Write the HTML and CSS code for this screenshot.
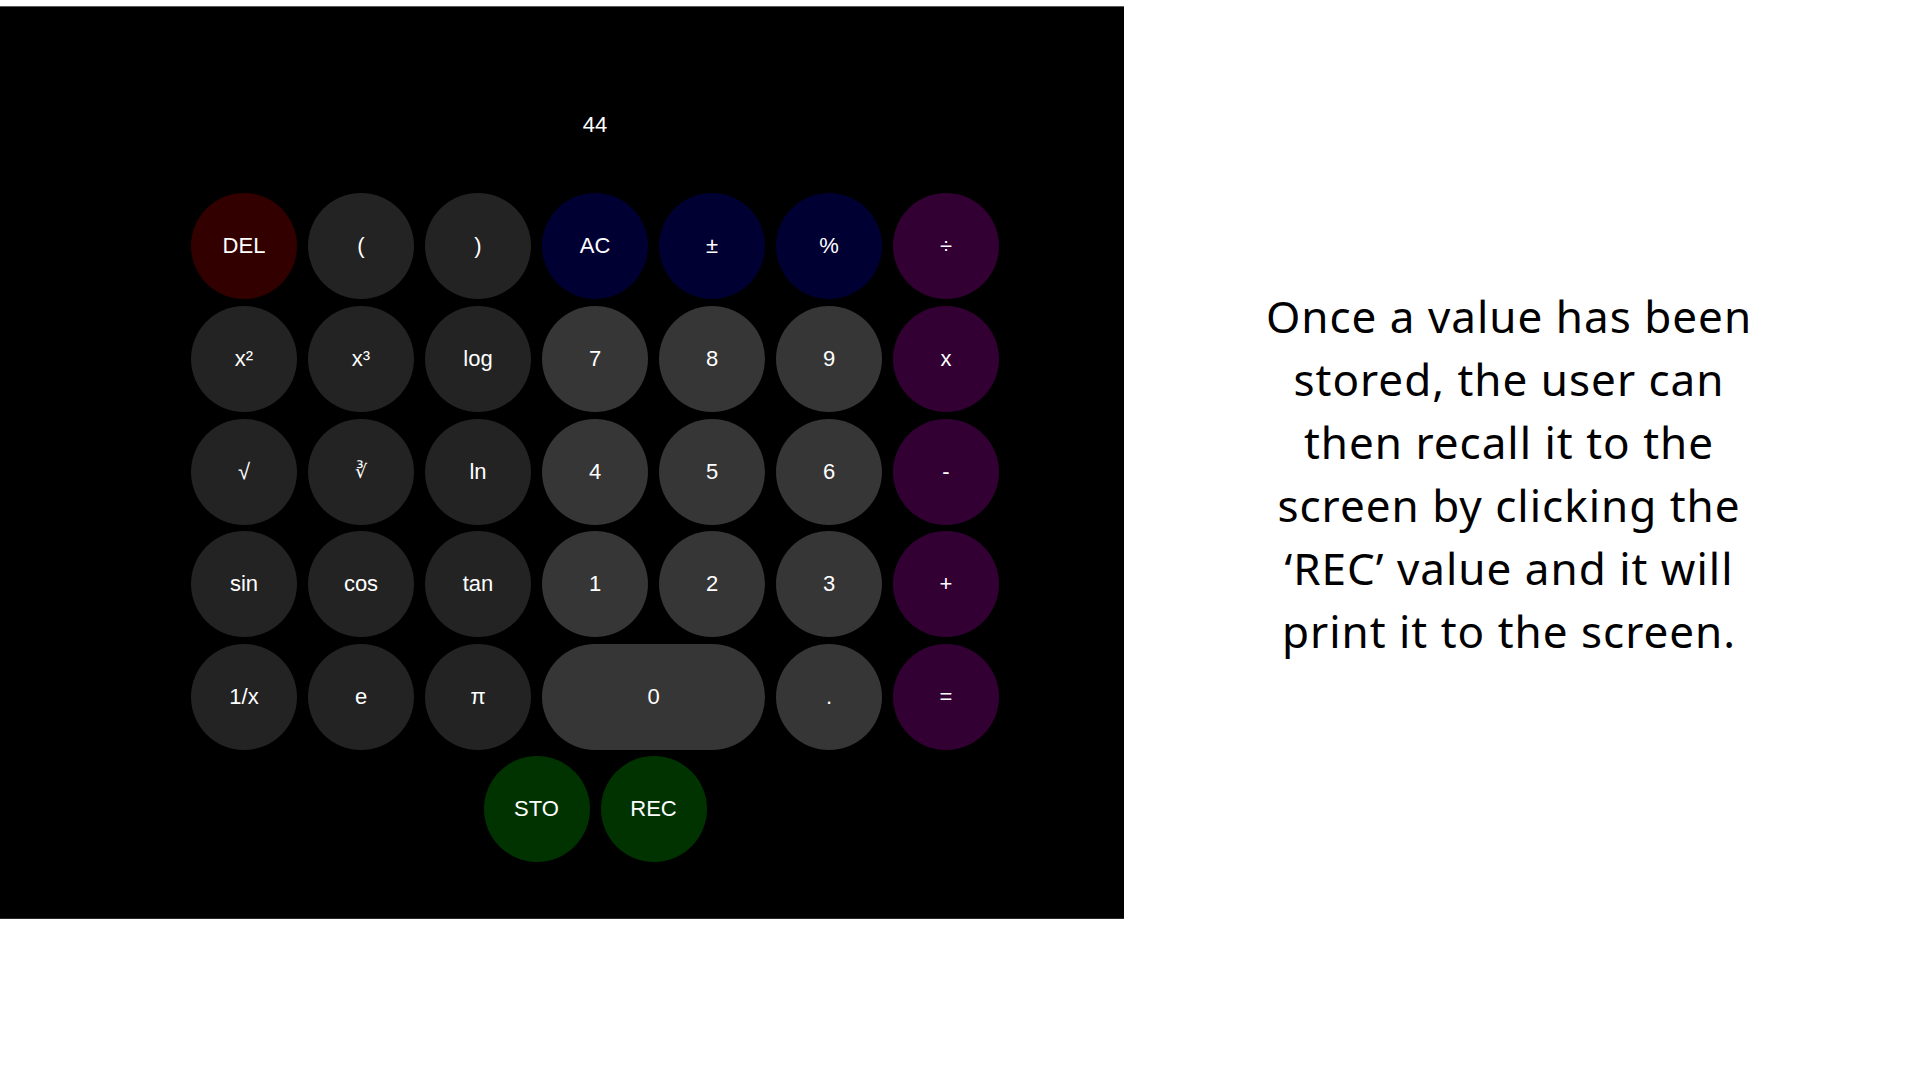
FILE: index.html
```html
<!DOCTYPE html>
<html lang="en">
<head>
<meta charset="utf-8">
<title>Calculator – Store and Recall</title>
<link rel="stylesheet" href="styles.css">
</head>
<body>
<div class="slide">
  <div class="calc-panel">
    <div class="calc">
      <div class="display">44</div>
      <div class="keys">
        <div class="key del">DEL</div>
        <div class="key fn">(</div>
        <div class="key fn">)</div>
        <div class="key clear">AC</div>
        <div class="key clear">±</div>
        <div class="key clear">%</div>
        <div class="key op">÷</div>

        <div class="key fn">x²</div>
        <div class="key fn">x³</div>
        <div class="key fn">log</div>
        <div class="key num">7</div>
        <div class="key num">8</div>
        <div class="key num">9</div>
        <div class="key op">x</div>

        <div class="key fn">√</div>
        <div class="key fn small">∛</div>
        <div class="key fn">ln</div>
        <div class="key num">4</div>
        <div class="key num">5</div>
        <div class="key num">6</div>
        <div class="key op">-</div>

        <div class="key fn">sin</div>
        <div class="key fn">cos</div>
        <div class="key fn">tan</div>
        <div class="key num">1</div>
        <div class="key num">2</div>
        <div class="key num">3</div>
        <div class="key op">+</div>

        <div class="key fn">1/x</div>
        <div class="key fn">e</div>
        <div class="key fn">π</div>
        <div class="key num wide">0</div>
        <div class="key num">.</div>
        <div class="key op">=</div>
      </div>
      <div class="memory">
        <div class="key mem">STO</div>
        <div class="key mem">REC</div>
      </div>
    </div>
  </div>
  <div class="note">
    <p class="note-text">Once a value has been<br>stored, the user can<br>then recall it to the<br>screen by clicking the<br>‘REC’ value and it will<br>print it to the screen.</p>
  </div>
</div>
</body>
</html>
```

FILE: styles.css
```css
html, body {
  margin: 0;
  padding: 0;
  background: #ffffff;
}

body {
  width: 1920px;
  height: 1080px;
  overflow: hidden;
}

.slide {
  display: flex;
  align-items: flex-start;
  padding-top: 6px;
}

.calc-panel {
  width: 1124px;
  height: 913px;
  background: #000000;
  border-top: 1px solid #5a5a5a;
  border-bottom: 1px solid #2a2a2a;
  box-sizing: border-box;
  padding-left: 191px;
  padding-top: 105px;
}

.calc {
  width: 808px;
  display: flex;
  flex-direction: column;
  font-family: "Liberation Sans", Arial, "DejaVu Sans", sans-serif;
  color: #ffffff;
}

.display {
  text-align: center;
  font-size: 22px;
  line-height: 26px;
  height: 26px;
  margin-bottom: 55px;
}

.keys {
  display: grid;
  grid-template-columns: repeat(7, 106px);
  grid-auto-rows: 106px;
  column-gap: 11px;
  row-gap: 6.75px;
}

.key {
  display: flex;
  align-items: center;
  justify-content: center;
  width: 106px;
  height: 106px;
  border-radius: 53px;
  font-size: 22px;
  color: #ffffff;
  box-sizing: border-box;
}

.key.wide {
  grid-column: span 2;
  width: auto;
}

.key.small {
  font-size: 19px;
}

.fn { background: #232323; }
.num { background: #363636; }
.del { background: #330000; }
.clear { background: #000033; }
.op { background: #330033; }
.mem { background: #003300; }

.memory {
  display: flex;
  justify-content: center;
  gap: 11px;
  margin-top: 6px;
}

.note {
  flex: 1;
  padding-top: 279px;
  padding-right: 26px;
  display: flex;
  justify-content: center;
}

.note-text {
  margin: 0;
  white-space: nowrap;
  text-align: center;
  font-family: "Noto Sans", "Open Sans", sans-serif;
  font-size: 44px;
  letter-spacing: 1px;
  line-height: 63px;
  color: #000000;
}
```
